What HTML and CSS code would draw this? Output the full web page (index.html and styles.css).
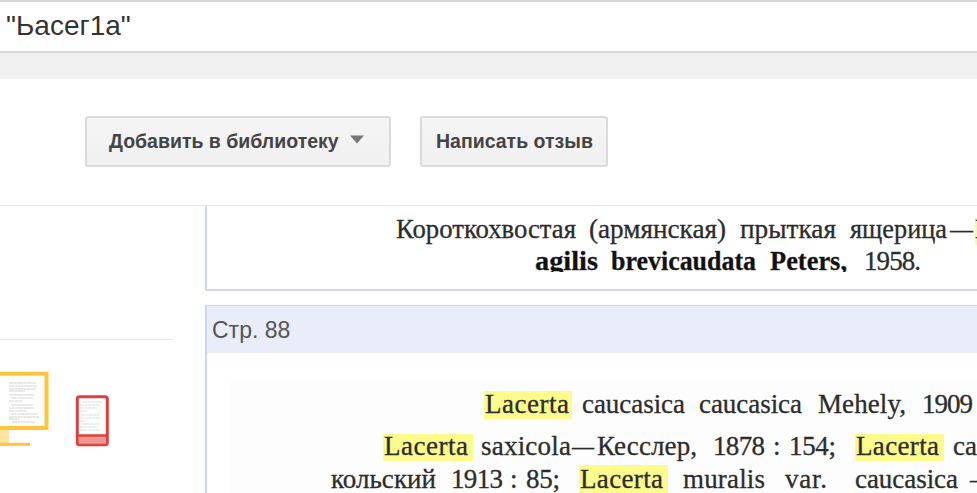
FILE: index.html
```html
<!DOCTYPE html>
<html lang="ru">
<head>
<meta charset="utf-8">
<title>Книги</title>
<link rel="stylesheet" href="styles.css">
</head>
<body>
<header class="search">"Ьасег1а"</header>
<div class="strip"></div>
<nav class="toolbar">
  <button class="btn btn-library">Добавить в библиотеку<svg class="arrow" width="14" height="9" viewBox="0 0 14 9"><path d="M0 0.5H14L7 8.5Z" fill="#777"/></svg></button>
  <button class="btn btn-review">Написать отзыв</button>
</nav>
<main class="content">
  <aside class="side">
    <div class="devices">
      <svg width="120" height="90" viewBox="0 365 120 90">
        <path d="M-10 373.7H46.5V428H-10" fill="#fff" stroke="#ffc53d" stroke-width="4"/>
        <rect x="0" y="430" width="9" height="13" fill="#ffe3a0"/>
        <path d="M0 444.3H30" stroke="#ffc53d" stroke-width="3"/>
        <path d="M9 383H36M9 386H37M9 389H36M9 391H25M9 395H34M11 398H33M9 401H22M11 405H33M9 408H34M9 411H27M11 414H38M9 417H39M9 419H19M12 422H35" stroke="#e8e8e8" stroke-width="1.8" stroke-dasharray="5 .5 3 .4"/>
        <rect x="77.3" y="396.8" width="30" height="48" rx="2" fill="#fff" stroke="#df403c" stroke-width="3"/>
        <rect x="79" y="436" width="27" height="7.5" fill="#ec9693"/>
        <path d="M78 435.5H107" stroke="#df403c" stroke-width="2.5"/>
        <path d="M83 402H102M80 405H99M80 408H97M80 411H87M81 415H99M80 418H101M80 421H86M82 424H99M80 427H97M80 430H100" stroke="#e8e8e8" stroke-width="1.6" stroke-dasharray="4 .5 3 .4"/>
      </svg>
    </div>
  </aside>
  <section class="pages">
    <article class="page page-first">
      <svg class="scan" width="770" height="66" viewBox="207 206 770 66">
        <rect class="mark" x="975" y="218" width="10" height="27"/>
        <text x="396" y="237.5" textLength="180" lengthAdjust="spacingAndGlyphs">Короткохвостая</text>
        <text x="589" y="237.5" textLength="137" lengthAdjust="spacingAndGlyphs">(армянская)</text>
        <text x="740" y="237.5" textLength="96" lengthAdjust="spacingAndGlyphs">прыткая</text>
        <text x="850" y="237.5" textLength="97" lengthAdjust="spacingAndGlyphs">ящерица</text>
        <text x="950" y="237.5" textLength="23" lengthAdjust="spacingAndGlyphs">—</text>
        <text x="975" y="237.5">L</text>
        <g class="strong">
          <text x="535" y="270" textLength="63" lengthAdjust="spacingAndGlyphs">agilis</text>
          <text x="611" y="270" textLength="145" lengthAdjust="spacingAndGlyphs">brevicaudata</text>
          <text x="770" y="270" textLength="77" lengthAdjust="spacingAndGlyphs">Peters,</text>
        </g>
        <text x="864" y="270" textLength="57">1958.</text>
      </svg>
    </article>
    <article class="page">
      <h2 class="page-title">Стр. 88</h2>
      <svg class="scan" width="770" height="140" viewBox="207 353 770 140">
        <rect x="230" y="380" width="747" height="113" fill="#fdfdfd"/>
        <g class="mark">
          <rect x="484" y="391" width="88" height="28"/>
          <rect x="383" y="434" width="90" height="27"/>
          <rect x="855" y="434" width="89" height="27"/>
          <rect x="579" y="465" width="89" height="28"/>
        </g>
        <text x="485" y="412.5" textLength="84">Lacerta</text>
        <text x="582" y="412.5" textLength="103">caucasica</text>
        <text x="699" y="412.5" textLength="103">caucasica</text>
        <text x="818" y="412.5" textLength="88">Mehely,</text>
        <text x="922" y="412.5" textLength="51">1909</text>
        <text x="384" y="455" textLength="84">Lacerta</text>
        <text x="481" y="455" textLength="90">saxicola</text>
        <text x="572" y="455" textLength="22" lengthAdjust="spacingAndGlyphs">—</text>
        <text x="597" y="455" textLength="100">Кесслер,</text>
        <text x="713" y="455" textLength="52">1878</text>
        <text x="773" y="455">:</text>
        <text x="789" y="455" textLength="47">154;</text>
        <text x="856" y="455" textLength="83">Lacerta</text>
        <text x="953" y="455">ca</text>
        <text x="331" y="487.5" textLength="105">кольский</text>
        <text x="451" y="487.5" textLength="52">1913</text>
        <text x="510" y="487.5">:</text>
        <text x="526" y="487.5" textLength="34">85;</text>
        <text x="580" y="487.5" textLength="83">Lacerta</text>
        <text x="683" y="487.5" textLength="82">muralis</text>
        <text x="785" y="487.5" textLength="42">var.</text>
        <text x="855" y="487.5" textLength="103">caucasica</text>
        <text x="970" y="487.5">—</text>
      </svg>
    </article>
  </section>
</main>
</body>
</html>
```
FILE: styles.css
```css
* { box-sizing: border-box; }
body {
  margin: 0;
  height: 493px;
  overflow: hidden;
  background: #fff;
  color: #333;
  font-family: "Liberation Sans", Arial, sans-serif;
}
.search {
  height: 53px;
  padding-left: 6px;
  border-top: 2px solid #d9d9d9;
  border-bottom: 2px solid #d9d9d9;
  font-size: 28px;
  line-height: 47px;
}
.strip { height: 26px; background: #f0f0f0; }
.toolbar {
  display: flex;
  gap: 29px;
  height: 127px;
  padding: 37px 0 0 85px;
  border-bottom: 1px solid #e8e8e8;
}
.btn {
  display: flex;
  align-items: center;
  height: 51px;
  padding: 0 0 1px;
  border: 2px solid #dadada;
  border-radius: 3px;
  background: linear-gradient(#f5f5f5, #f0f0f0);
  color: #444;
  font: bold 19.5px "Liberation Sans", Arial, sans-serif;
  white-space: nowrap;
}
.btn-library { width: 306px; padding-left: 22px; }
.btn-review { width: 188px; padding-left: 14px; }
.arrow { margin: -4px 0 0 11px; }
.content { display: flex; height: 287px; }
.side { width: 205px; flex: none; }
.devices {
  width: 173px;
  margin-top: 133px;
  padding-top: 25px;
  border-top: 1px solid #e8e8e8;
}
.pages { flex: 1; min-width: 0; }
.page {
  height: 190px;
  border-left: 2px solid #c9d7f1;
  border-top: 1px solid #c9d7f1;
}
.page-first {
  height: 85px;
  margin-bottom: 14px;
  border-top: 0;
  border-bottom: 2px solid #c9d7f1;
}
.page-title {
  height: 47px;
  margin: 0;
  padding-left: 5px;
  background: #e9edf9;
  color: #555;
  font-size: 23px;
  font-weight: normal;
  line-height: 48px;
}
.scan {
  display: block;
  font-family: "Liberation Serif", "Times New Roman", serif;
  font-size: 27px;
  fill: #2c2c2c;
  stroke: none;
}
.scan text { stroke: #2c2c2c; stroke-width: 0.3px; }
.strong { font-weight: bold; fill: #111; }
.mark { fill: #fdfb8c; }
```
